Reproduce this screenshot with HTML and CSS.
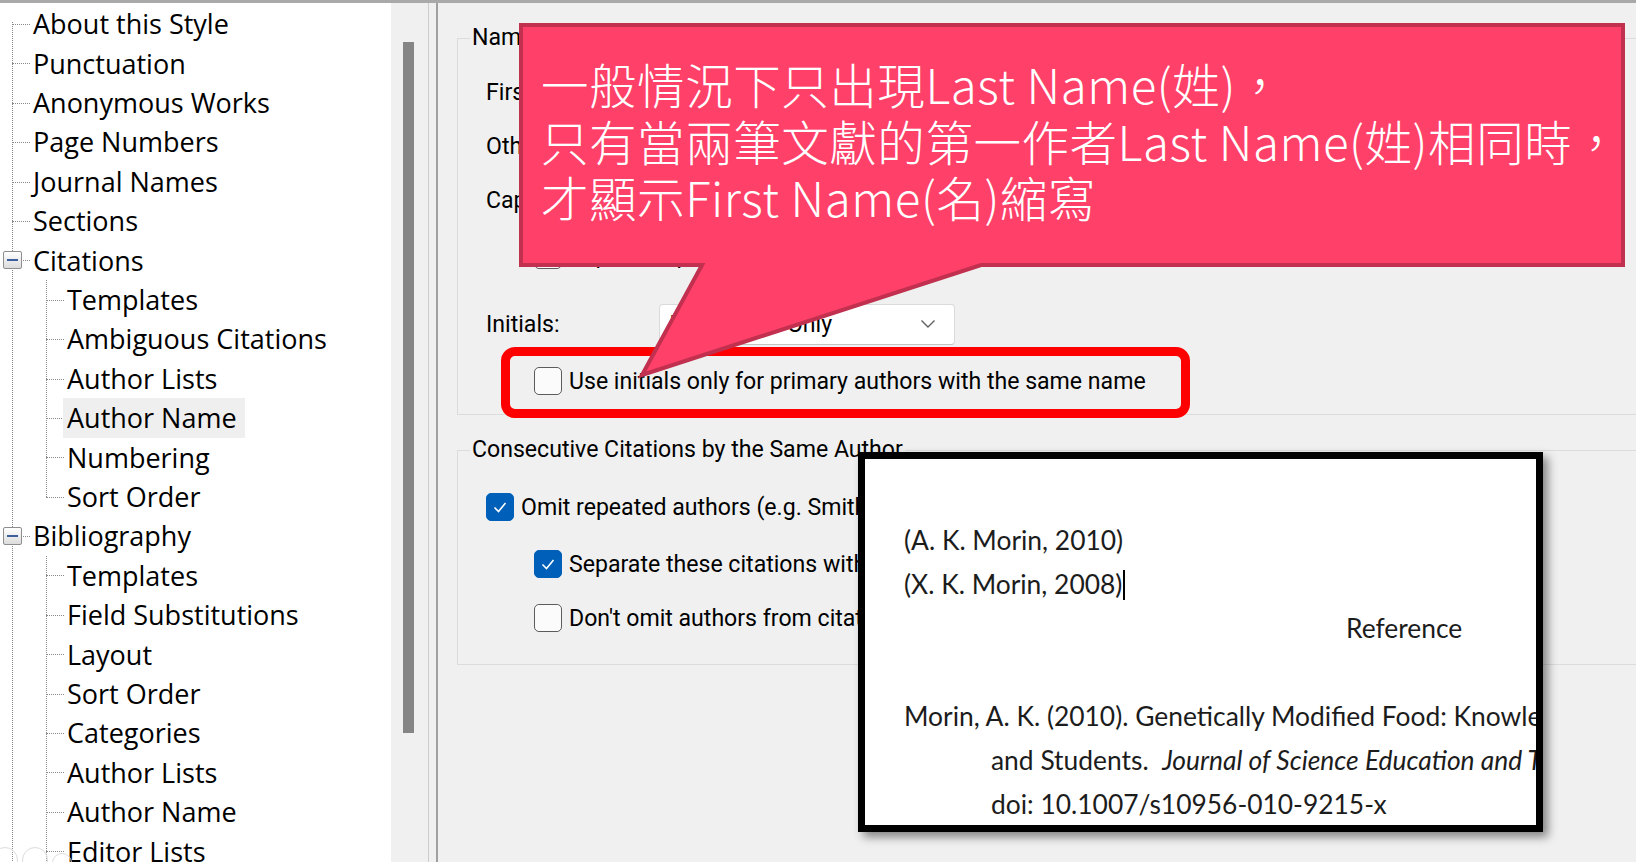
FILE: index.html
```html
<!DOCTYPE html>
<html lang="zh-Hant">
<head>
<meta charset="utf-8">
<title>Author Name</title>
<link rel="stylesheet" href="styles.css">
</head>
<body>
<div class="app">
  <nav class="tree-pane">
    <ul class="tree">
      <li><div class="node">About this Style</div></li>
      <li><div class="node">Punctuation</div></li>
      <li><div class="node">Anonymous Works</div></li>
      <li><div class="node">Page Numbers</div></li>
      <li><div class="node">Journal Names</div></li>
      <li><div class="node">Sections</div></li>
      <li class="parent"><div class="node"><span class="exp"></span>Citations</div>
        <ul class="sub">
          <li><div class="node">Templates</div></li>
          <li><div class="node">Ambiguous Citations</div></li>
          <li><div class="node">Author Lists</div></li>
          <li><div class="node"><span class="sel">Author Name</span></div></li>
          <li><div class="node">Numbering</div></li>
          <li><div class="node">Sort Order</div></li>
        </ul>
      </li>
      <li class="parent"><div class="node"><span class="exp"></span>Bibliography</div>
        <ul class="sub cont">
          <li><div class="node">Templates</div></li>
          <li><div class="node">Field Substitutions</div></li>
          <li><div class="node">Layout</div></li>
          <li><div class="node">Sort Order</div></li>
          <li><div class="node">Categories</div></li>
          <li><div class="node">Author Lists</div></li>
          <li><div class="node">Author Name</div></li>
          <li><div class="node">Editor Lists</div></li>
        </ul>
      </li>
    </ul>
  </nav>
  <div class="vscroll"><div class="thumb"></div></div>
  <div class="splitter"></div>
  <main class="panel">
    <fieldset class="group g1">
      <legend>Name Format</legend>
      <div class="row r1"><span class="label">First Author:</span></div>
      <div class="row r2"><span class="label">Other Authors:</span></div>
      <div class="row r3"><span class="label">Capitalization:</span></div>
      <div class="row r4 sub-row"><span class="cb"></span><span class="cb-text">Replace repeated authors</span></div>
      <div class="row r5"><span class="label">Initials:</span>
        <div class="select"><span class="select-text">Last Name Only</span>
          <svg class="chev" width="16" height="10" viewBox="0 0 16 10"><polyline points="1.5,1.5 8,8 14.5,1.5" fill="none" stroke="#5f5f5f" stroke-width="1.4"/></svg>
        </div>
      </div>
      <div class="row r6 sub-row"><span class="cb"></span><span class="cb-text">Use initials only for primary authors with the same name</span></div>
    </fieldset>
    <fieldset class="group g2">
      <legend>Consecutive Citations by the Same Author</legend>
      <div class="row c1"><span class="cb on"><svg width="28" height="28" viewBox="0 0 28 28"><polyline points="8.5,14.5 12.5,18.5 19.5,10" fill="none" stroke="#fff" stroke-width="1.6"/></svg></span><span class="cb-text">Omit repeated authors (e.g. Smith, 1990, 1995)</span></div>
      <div class="row c2 sub-row"><span class="cb on"><svg width="28" height="28" viewBox="0 0 28 28"><polyline points="8.5,14.5 12.5,18.5 19.5,10" fill="none" stroke="#fff" stroke-width="1.6"/></svg></span><span class="cb-text">Separate these citations with:</span></div>
      <div class="row c3 sub-row"><span class="cb"></span><span class="cb-text">Don't omit authors from citations</span></div>
    </fieldset>
  </main>
</div>

<div class="redbox"></div>

<div class="callout">
  <svg class="callout-shape" width="1115" height="362" viewBox="0 0 1115 362">
    <path d="M6 6 H1108 V246 H466 L127 356 L187 246 H6 Z" fill="#ff4069" stroke="#c1304f" stroke-width="4" stroke-linejoin="miter"/>
  </svg>
  <div class="callout-text">
    <div>一般情況下只出現Last Name(姓)，</div>
    <div>只有當兩筆文獻的第一作者Last Name(姓)相同時，</div>
    <div>才顯示First Name(名)縮寫</div>
  </div>
</div>

<div class="inset">
  <div class="doc-line">(A. K. Morin, 2010)</div>
  <div class="doc-line">(X. K. Morin, 2008)<span class="caret"></span></div>
  <div class="doc-line ref-title">Reference</div>
  <div class="doc-line blank"></div>
  <div class="doc-line">Morin, A. K. (2010). Genetically Modified Food: Knowledge and Attitudes of Teachers</div>
  <div class="doc-line hang">and Students. &nbsp;<i>Journal of Science Education and Technology</i></div>
  <div class="doc-line hang">doi: 10.1007/s10956-010-9215-x</div>
</div>

<div class="marks"><span class="ring"></span><span class="ring"></span><span class="ring small"></span></div>
</body>
</html>
```

FILE: styles.css
```css
* { box-sizing: border-box; }
html, body { margin: 0; padding: 0; }
body {
  width: 1636px;
  height: 862px;
  overflow: hidden;
  position: relative;
  background: #f0f0f0;
  font-family: "Open Sans", "Noto Sans", sans-serif;
  color: #000;
}
.app {
  display: flex;
  height: 862px;
  border-top: 3px solid #a9a9a9;
}

/* ---------- tree ---------- */
.tree-pane {
  width: 391px;
  flex: none;
  background: #fff;
  overflow: hidden;
  padding-top: 1.3px;
}
.tree, .tree ul {
  list-style: none;
  margin: 0;
  padding: 0;
  position: relative;
}
.tree { margin-left: 12px; }
.tree::before, .tree ul::before {
  content: "";
  position: absolute;
  left: 0;
  top: 18px;
  bottom: 0;
  border-left: 1px dotted #8a8a8a;
}
.tree > li > ul.sub { margin-left: 34px; }
.tree ul.sub::before { top: 0; bottom: 19.7px; }
.tree ul.sub.cont::before { bottom: 0; }
.tree li { position: relative; }
.tree li::before {
  content: "";
  position: absolute;
  left: 0;
  top: 19.7px;
  width: 18px;
  border-top: 1px dotted #8a8a8a;
}
.node {
  height: 39.4px;
  line-height: 39.4px;
  padding-left: 21px;
  font-size: 27px;
  white-space: nowrap;
  position: relative;
}
.sel {
  display: inline-block;
  height: 40px;
  line-height: 39px;
  background: #efefef;
  margin-left: -4px;
  padding: 0 8px 0 4px;
}
.exp {
  position: absolute;
  left: -9px;
  top: 10.7px;
  width: 19px;
  height: 18px;
  border: 1px solid #8e8e8e;
  border-radius: 2px;
  background: linear-gradient(#ffffff, #dcdcdc);
  z-index: 1;
}
.exp::after {
  content: "";
  position: absolute;
  left: 3px;
  right: 3px;
  top: 7px;
  height: 2px;
  background: #3e5f9e;
}

/* ---------- scrollbar & splitter ---------- */
.vscroll {
  width: 37px;
  flex: none;
  background: #f0f0f0;
  padding: 39px 0 0 12px;
}
.thumb {
  width: 11px;
  height: 691px;
  background: #858585;
}
.splitter {
  width: 10px;
  flex: none;
  background: #f0f0f0;
  border-left: 1px solid #cdcdcd;
  border-right: 2px solid #a0a0a0;
}

/* ---------- right panel ---------- */
.panel {
  flex: 1;
  background: #f0f0f0;
  font-family: "Roboto", "Noto Sans", sans-serif;
  font-size: 23.1px;
  color: #000;
  overflow: hidden;
}
.group {
  border: 1px solid #dcdcdc;
  margin: 0 -40px 0 19px;
  padding: 0 0 0 14px;
  min-width: 0;
}
.group legend {
  padding: 0 2px;
  height: 26px;
  line-height: 26px;
  margin-left: -2px;
}
.g1 { margin-top: 22px; height: 390px; }
.g2 { margin-top: 22px; height: 228px; }

.row {
  height: 40px;
  display: flex;
  align-items: center;
  white-space: nowrap;
}
.row .label { margin-left: 14px; }
.sub-row { padding-left: 62px; }
.r1 { margin-top: 21px; }
.r2 { margin-top: 14px; }
.r3 { margin-top: 14px; }
.r4 { margin-top: 15px; }
.r5 { margin-top: 29px; }
.r6 { margin-top: 17px; }
.c1 { margin-top: 24px; padding-left: 14px; }
.c2 { margin-top: 17px; }
.c3 { margin-top: 14px; }

.cb {
  width: 28px;
  height: 28px;
  flex: none;
  border: 1.5px solid #5c5c5c;
  border-radius: 5px;
  background: #fbfbfb;
  display: flex;
  align-items: center;
  justify-content: center;
}
.cb.on {
  background: #005fb8;
  border-color: #005fb8;
}
.cb.on svg { display: block; margin: -1.5px; }
.cb-text { margin-left: 7px; }

.select {
  margin-left: 99px;
  width: 296px;
  height: 41px;
  background: #fff;
  border: 1px solid #dadada;
  border-bottom-color: #c4c4c4;
  border-radius: 4px;
  display: flex;
  align-items: center;
  padding: 0 18px 0 10px;
}
.select-text { flex: 1; }
.chev { display: block; }

/* ---------- annotations ---------- */
.redbox {
  position: absolute;
  left: 501px;
  top: 347px;
  width: 689px;
  height: 71px;
  border: 9px solid #ff0000;
  border-radius: 14px;
}
.callout {
  position: absolute;
  left: 515px;
  top: 19px;
  width: 1115px;
  height: 362px;
}
.callout-shape {
  position: absolute;
  left: 0;
  top: 0;
}
.callout-text {
  position: relative;
  padding: 37px 0 0 26px;
  color: #fff;
  font-family: "Noto Sans CJK TC", "Noto Sans CJK SC", sans-serif;
  font-size: 47.5px;
  line-height: 56.5px;
  font-weight: 300;
  letter-spacing: 0.55px;
  white-space: nowrap;
}

.inset {
  position: absolute;
  left: 858px;
  top: 452px;
  width: 685px;
  height: 380px;
  border: 7px solid #000;
  background: #fff;
  box-shadow: 5px 5px 9px rgba(0, 0, 0, 0.45);
  overflow: hidden;
  padding: 59px 0 0 39px;
  font-family: "Lato", "Open Sans", sans-serif;
  font-size: 26.4px;
  color: #1c1c1c;
}
.doc-line {
  height: 44px;
  line-height: 44px;
  white-space: nowrap;
}
.ref-title { padding-left: 442px; }
.hang { padding-left: 87px; }
.caret {
  display: inline-block;
  width: 2px;
  height: 30px;
  background: #000;
  vertical-align: -6px;
  margin-left: 1px;
}

.marks {
  position: absolute;
  left: -8px;
  top: 847px;
  display: flex;
  gap: 4px;
}
.ring {
  width: 26px;
  height: 26px;
  border: 1.5px solid #dcdcdc;
  border-radius: 50%;
}
.ring.small { width: 20px; height: 20px; margin-top: 6px; }
```
